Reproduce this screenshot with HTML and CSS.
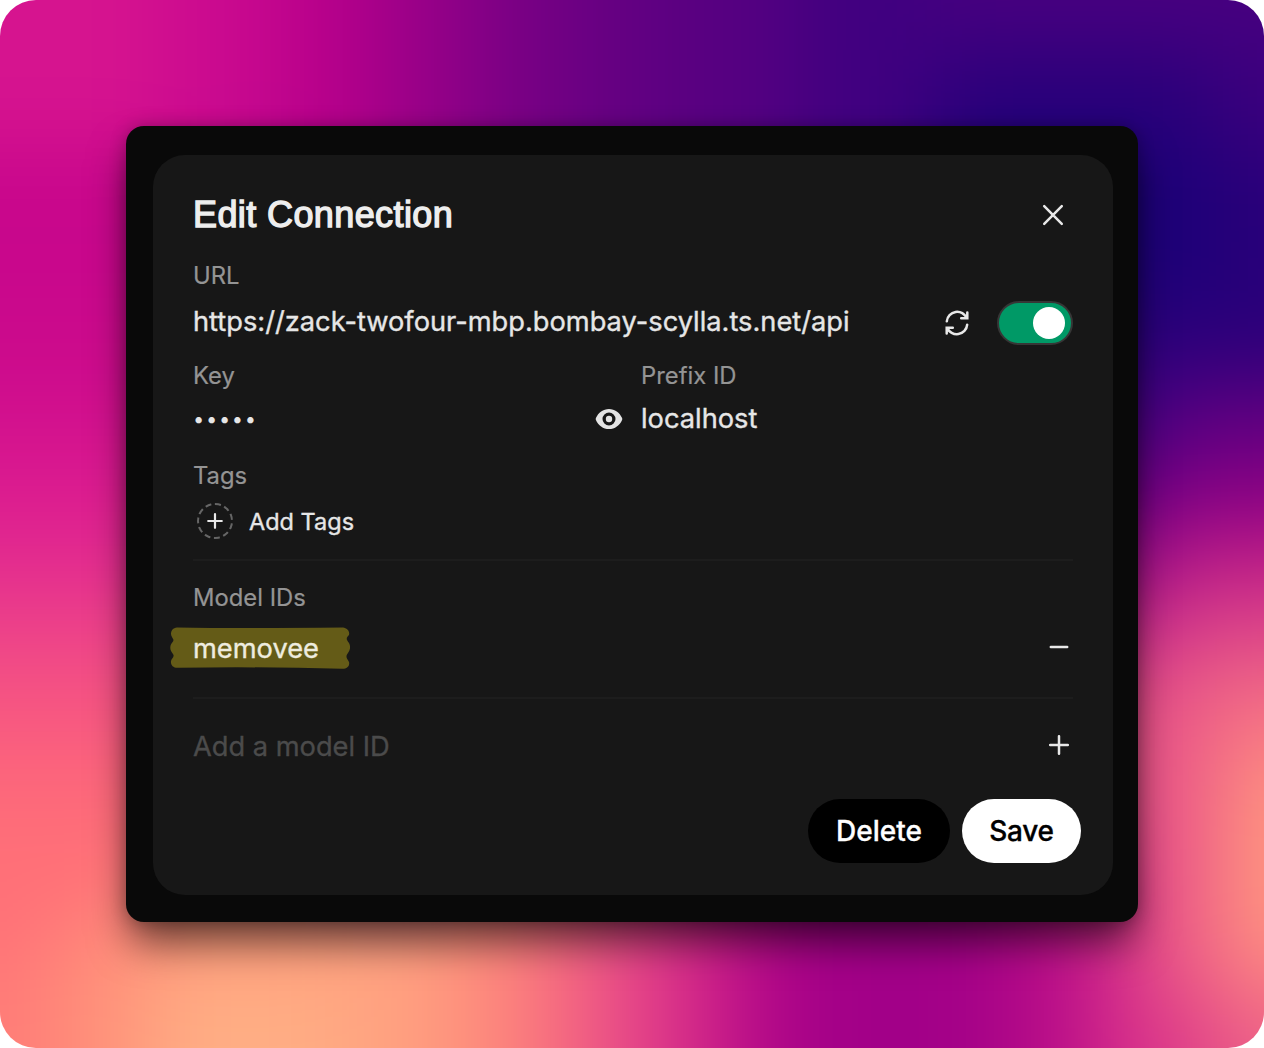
FILE: index.html
```html
<!DOCTYPE html>
<html lang="en">
<head>
<meta charset="utf-8">
<title>Edit Connection</title>
<link rel="stylesheet" href="styles.css">
</head>
<body>
<main class="stage">
  <svg class="backdrop" viewBox="0 0 1264 1048" aria-hidden="true">
    <defs>
      <filter id="soft" filterUnits="userSpaceOnUse" x="-200" y="-200" width="1664" height="1448" color-interpolation-filters="sRGB"><feGaussianBlur stdDeviation="42"/></filter>
    </defs>
    <g filter="url(#soft)">
      <!-- centre -->
      <path fill="#a0108a" d="M-400-400h2100v1900h-2100z"/>
      <!-- top edge -->
      <path fill="#d6148f" d="M-400-400h560v550h-560z"/>
      <path fill="#cb0a8f" d="M158-400h120v550h-120z"/>
      <path fill="#b8008b" d="M276-400h100v650h-100z"/>
      <path fill="#980088" d="M374-400h100v650h-100z"/>
      <path fill="#780084" d="M472-400h100v650h-100z"/>
      <path fill="#640082" d="M570-400h100v650h-100z"/>
      <path fill="#560081" d="M668-400h130v650h-130z"/>
      <path fill="#400080" d="M796-400h140v650h-140z"/>
      <path fill="#28007a" d="M934-400h766v550h-766z"/>
      <path fill="#480080" d="M934-400h766v450h-766z"/>
      <path fill="#3c007e" d="M1210 40h400v110h-400z"/>
      <!-- right edge -->
      <path fill="#1c0078" d="M934 148h766v170h-766z"/>
      <path fill="#2a007a" d="M1220 148h400v170h-400z"/>
      <path fill="#2a007a" d="M934 298h766v80h-766z"/>
      <path fill="#3c0080" d="M900 376h280v60h-280z"/>
      <path fill="#5a0080" d="M1170 376h500v60h-500z"/>
      <path fill="#520080" d="M900 434h280v55h-280z"/>
      <path fill="#740082" d="M1170 434h500v55h-500z"/>
      <path fill="#720082" d="M900 487h280v50h-280z"/>
      <path fill="#940084" d="M1170 487h500v50h-500z"/>
      <path fill="#940a86" d="M900 535h280v50h-280z"/>
      <path fill="#c02088" d="M1170 535h500v50h-500z"/>
      <path fill="#b41a88" d="M900 583h280v50h-280z"/>
      <path fill="#d43688" d="M1170 583h500v50h-500z"/>
      <path fill="#d03488" d="M900 631h280v50h-280z"/>
      <path fill="#e45288" d="M1170 631h500v50h-500z"/>
      <path fill="#e24c88" d="M900 679h280v360h-280z"/>
      <path fill="#f06286" d="M1170 679h60v380h-60z"/>
      <path fill="#f67484" d="M1228 679h500v380h-500z"/>
      <path fill="#ff967f" d="M1228 757h500v210h-500z"/>
      <!-- left edge -->
      <path fill="#c8068c" d="M-400 148h650v140h-650z"/>
      <path fill="#cb0a8c" d="M-400 286h650v110h-650z"/>
      <path fill="#d4128e" d="M-400 394h650v80h-650z"/>
      <path fill="#de2090" d="M-400 472h650v90h-650z"/>
      <path fill="#e8388c" d="M-400 560h650v80h-650z"/>
      <path fill="#f45084" d="M-400 638h650v90h-650z"/>
      <path fill="#fc647c" d="M-400 726h650v80h-650z"/>
      <path fill="#ff7078" d="M-400 804h650v180h-650z"/>
      <!-- bottom edge -->
      <path fill="#ff7c78" d="M-400 960h460v400h-460z"/>
      <path fill="#ff927a" d="M58 920h120v500h-120z"/>
      <path fill="#ff9a7c" d="M150 860h200v120h-200z"/>
      <path fill="#ffae84" d="M150 970h190v500h-190z"/>
      <path fill="#ffa280" d="M338 880h100v500h-100z"/>
      <path fill="#fe8e7c" d="M436 850h80v500h-80z"/>
      <path fill="#f8707e" d="M514 850h75v500h-75z"/>
      <path fill="#e84a88" d="M587 850h75v500h-75z"/>
      <path fill="#d42888" d="M660 850h70v500h-70z"/>
      <path fill="#b40888" d="M728 850h70v500h-70z"/>
      <path fill="#a20088" d="M796 850h200v500h-200z"/>
      <path fill="#b40a88" d="M994 850h80v500h-80z"/>
      <path fill="#cc1e8a" d="M1072 850h50v500h-50z"/>
      <path fill="#dc388a" d="M1120 1000h95v400h-95z"/>
      <path fill="#ec6087" d="M1213 1020h400v400h-400z"/>
    </g>
  </svg>
  <div class="window">
    <section class="dialog">
      <header class="title-row">
        <h1>Edit Connection</h1>
        <svg class="close" width="24" height="24" viewBox="0 0 24 24"><path d="M3.2 3.2l17.6 17.6M20.8 3.2L3.2 20.8"/></svg>
      </header>

      <div class="label url-label">URL</div>
      <div class="row url-row">
        <span class="value url">https://zack-twofour-mbp.bombay-scylla.ts.net/api</span>
        <div class="controls">
          <svg width="26" height="26" viewBox="0 0 26 26"><path d="M2.800 11.300A10.400 10.400 0 0 1 22.800 8.300M23.300 2.400V8.300H17.200M23.200 14.700A10.400 10.400 0 0 1 3.200 17.700M2.700 23.600V17.700H8.800"/></svg>
          <span class="toggle"><i></i></span>
        </div>
      </div>

      <div class="columns">
        <div>
          <div class="label">Key</div>
          <div class="row field">
            <span class="dots">•••••</span>
            <svg class="eye" width="28" height="22" viewBox="0 0 28 22"><path class="solid" fill-rule="evenodd" d="M.9 11.900Q.5 11 .9 10.100C3.300 4.600 8.200 1 14 1s10.700 3.600 13.100 9.100q.4.900 0 1.800C24.700 17.400 19.800 21 14 21S3.300 17.400.9 11.900zM14 4.500a6.500 6.500 0 1 0 0 13 6.500 6.500 0 0 0 0-13z"/><circle class="solid" cx="14" cy="11" r="3.200"/></svg>
          </div>
        </div>
        <div>
          <div class="label prefix">Prefix ID</div>
          <div class="row field"><span class="value host">localhost</span></div>
        </div>
      </div>

      <div class="label tags-label">Tags</div>
      <div class="add-tags">
        <span class="ring"><svg width="16" height="16" viewBox="0 0 16 16"><path d="M8 1.200v13.600M1.200 8h13.600"/></svg></span>
        <span class="add-text">Add Tags</span>
      </div>

      <hr>
      <div class="label models-label">Model IDs</div>
      <div class="row model-row">
        <span class="marked">
          <svg class="marker" width="180" height="44" viewBox="0 0 180 44"><path d="M7 1.500Q70 2.500 173 1.500C177 2 180 5 179 9C176 12 176 13 179 17C181 21 180 24 178 27C175 31 177 32 179 36C180 40 177 43 172 42.800Q90 40.500 8 41.800C3 42 .5 39 1 35C1.500 32 5 31 3 28C1 25-.5 23 .7 19C2 16 5 15 2.500 12C-.5 8 1 2 7 1.500z"/></svg>
          <span class="value memo">memovee</span>
        </span>
        <svg class="action" width="24" height="24" viewBox="0 0 24 24"><path d="M3.800 10h16.400"/></svg>
      </div>
      <hr class="second">
      <div class="row new-row">
        <span class="value placeholder">Add a model ID</span>
        <svg class="action" width="24" height="24" viewBox="0 0 24 24"><path d="M3.200 10h17.600M12 1.200v17.600"/></svg>
      </div>

      <footer>
        <button class="delete">Delete</button>
        <button class="save">Save</button>
      </footer>
    </section>
  </div>
</main>
</body>
</html>
```
FILE: styles.css
```css
* { box-sizing: border-box; }
body { margin: 0; background: #fff; font-family: Inter, "Liberation Sans", sans-serif; }
.stage {
  width: 1264px;
  height: 1048px;
  padding: 126px;
  border-radius: 36px;
  overflow: hidden;
  position: relative;
}
.backdrop { position: absolute; inset: 0; width: 100%; height: 100%; }
.window {
  position: relative;
  width: 1012px;
  height: 796px;
  padding: 29px 25px 27px 27px;
  background: #090909;
  border-radius: 18px;
  box-shadow: 0 24px 40px -4px rgba(0, 0, 0, .6), 0 0 16px rgba(0, 0, 0, .25);
}
.dialog {
  height: 740px;
  padding: 35px 32px 0 40px;
  border-radius: 32px;
  background: #171717;
  color: #e6e6e6;
}
svg { display: block; fill: none; stroke: #e8e8e8; stroke-width: 2.5; stroke-linecap: round; flex: none; }
.backdrop, .solid { stroke: none; }
.solid { fill: #e4e4e4; }
.title-row { display: flex; justify-content: space-between; align-items: center; height: 50px; padding-right: 16px; }
h1 {
  margin: 0;
  font: 400 36px/50px "Liberation Sans", sans-serif;
  letter-spacing: .4px;
  color: #eee;
  -webkit-text-stroke: 1.35px #eee;
}
.label { height: 28px; font-size: 23.8px; line-height: 28px; color: #949494; -webkit-text-stroke: .2px; }
.url-label { margin-top: 22px; }
.row { display: flex; align-items: center; justify-content: space-between; }
.value { font-size: 27.24px; line-height: 40px; white-space: nowrap; -webkit-text-stroke: .35px; }
.url-row { height: 44px; margin-top: 11px; padding-right: 8px; }
.url { padding-bottom: 3px; }
.controls { display: flex; align-items: center; gap: 27px; }
.toggle {
  display: flex;
  justify-content: flex-end;
  align-items: center;
  width: 76px;
  height: 44px;
  padding-right: 6px;
  border: 2px solid #363636;
  border-radius: 22px;
  background: #009966;
}
.toggle i { width: 32px; height: 32px; border-radius: 50%; background: #fff; }
.columns { display: grid; grid-template-columns: 430px 1fr; gap: 18px; margin-top: 17px; }
.field { height: 40px; margin-top: 9px; }
.dots { font-size: 20px; letter-spacing: 1.7px; }
.tags-label { margin-top: 23px; }
.add-tags { display: flex; align-items: center; height: 42px; margin-top: 10px; padding-left: 4px; gap: 16px; }
.ring { display: grid; place-items: center; width: 36px; height: 36px; border: 2px dashed #666; border-radius: 50%; }
.ring svg { stroke-width: 2.2; }
.add-text { font-size: 23.5px; -webkit-text-stroke: .35px; }
hr { width: 880px; height: 2px; margin: 17px 0 0; border: 0; background: #1d1d1d; }
.models-label { margin-top: 23px; }
.model-row { height: 42px; margin-top: 16px; padding-right: 10px; }
.marked { position: relative; }
.marker { position: absolute; left: -23px; top: -3px; }
.marker path { fill: #645b17; stroke: none; }
.memo { position: relative; color: #eeecdf; }
.second { margin-top: 27px; }
.new-row { height: 42px; margin-top: 27px; padding-right: 10px; }
.placeholder { color: #4b4b4b; }
footer { display: flex; justify-content: flex-end; gap: 12px; margin-top: 31px; }
button { height: 64px; padding: 0; border: 0; border-radius: 32px; font: 500 28px Inter, sans-serif; -webkit-text-stroke: .3px; }
.delete { width: 142px; background: #000; color: #fff; }
.save { width: 119px; background: #fff; color: #000; letter-spacing: -.3px; }
```
